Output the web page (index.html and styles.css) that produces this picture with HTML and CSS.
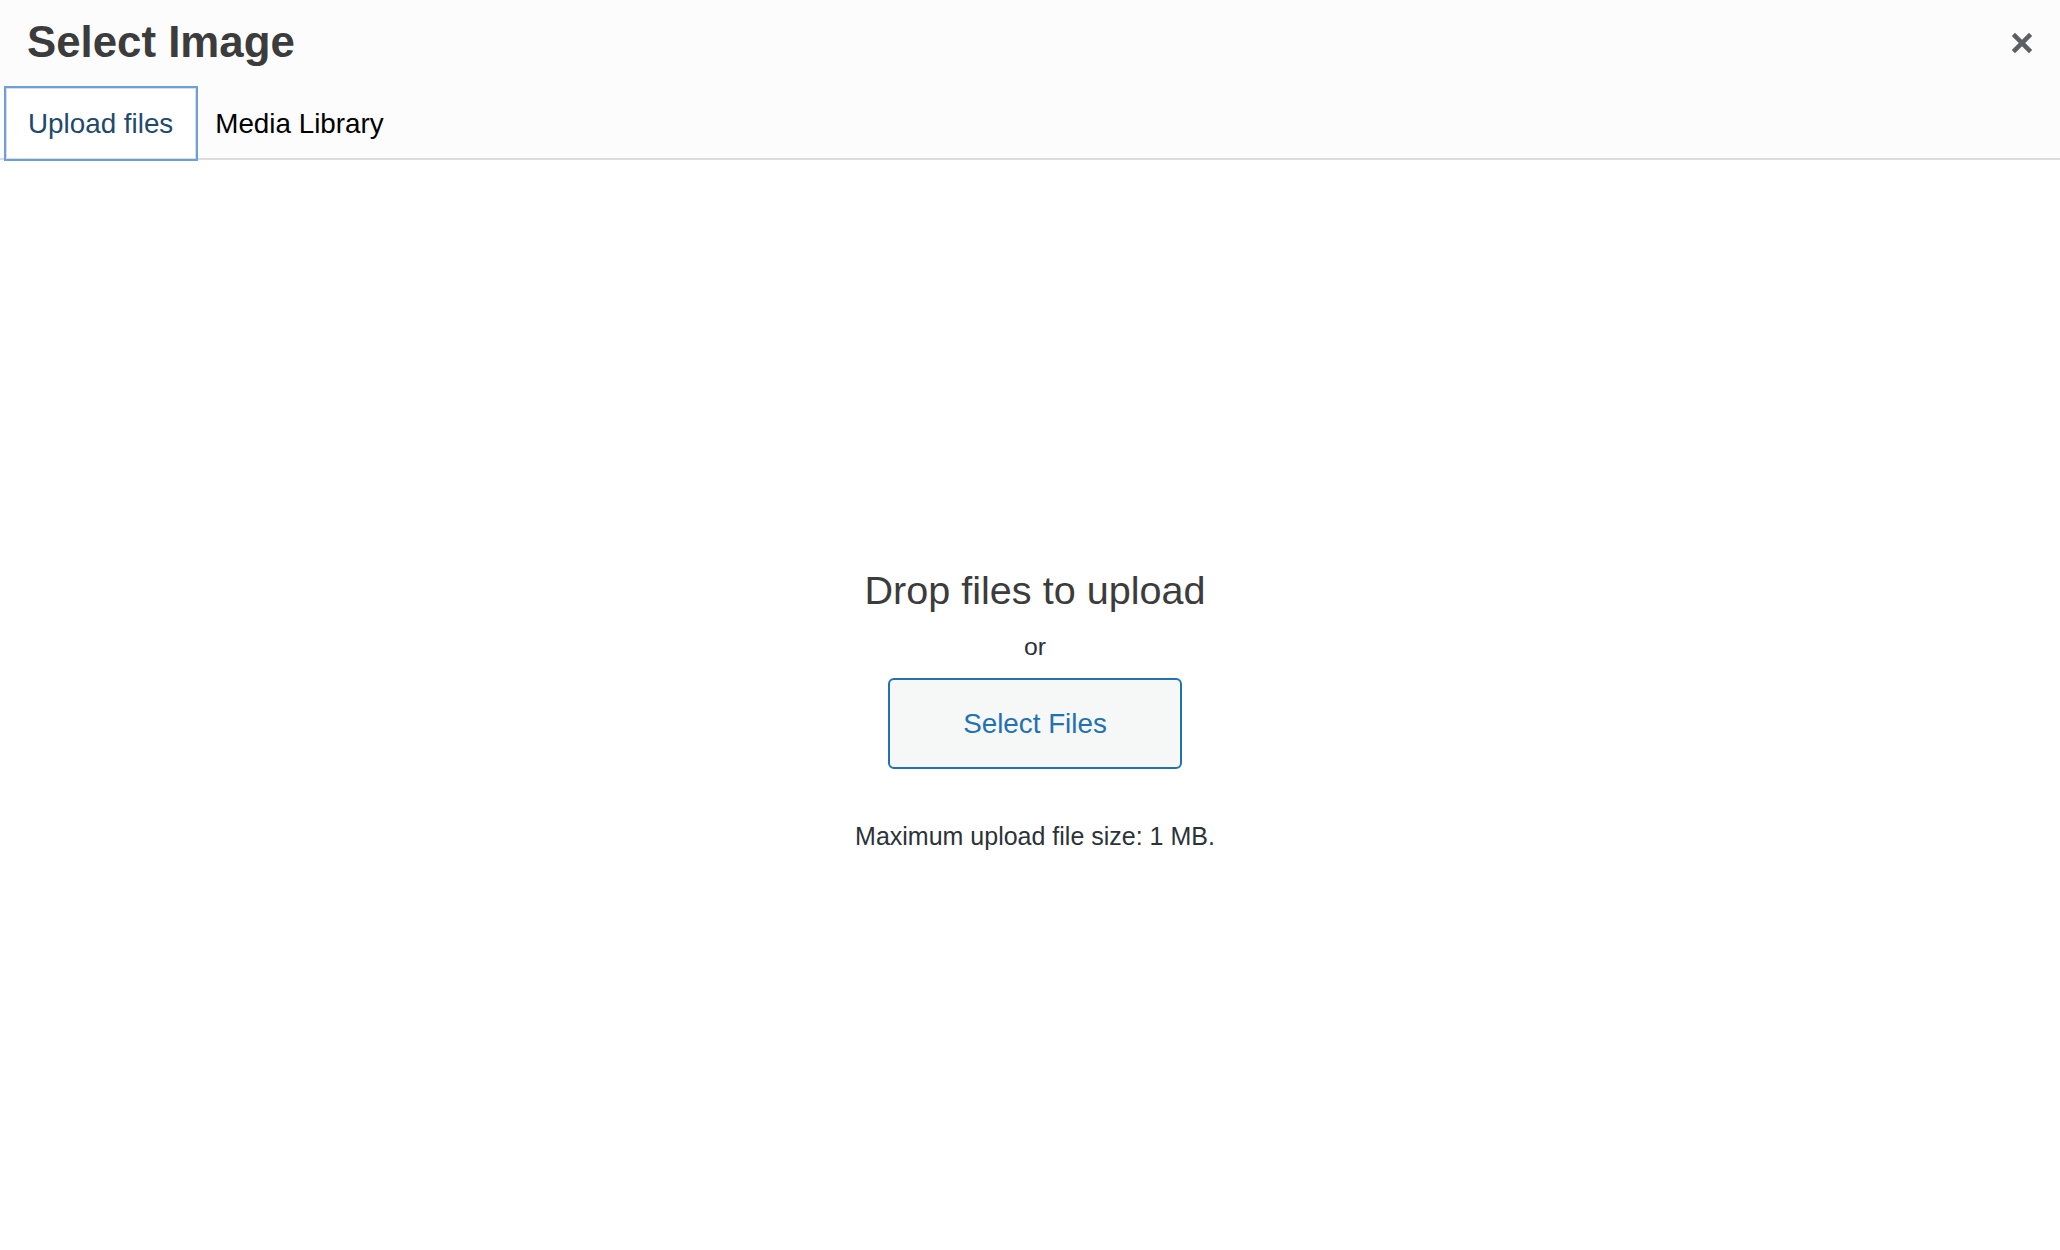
FILE: index.html
```html
<!DOCTYPE html>
<html lang="en">
<head>
<meta charset="utf-8">
<title>Select Image</title>
<link rel="stylesheet" href="styles.css">
</head>
<body>
<div class="modal">
  <header class="modal-header">
    <div class="title-row">
      <h1 class="modal-title">Select Image</h1>
      <button class="close-btn" aria-label="Close dialog">
        <svg width="22" height="22" viewBox="0 0 22 22" aria-hidden="true">
          <path d="M4 0.8 L11 7.8 L18 0.8 L21.2 4 L14.2 11 L21.2 18 L18 21.2 L11 14.2 L4 21.2 L0.8 18 L7.8 11 L0.8 4 Z" fill="#5c5f63"/>
        </svg>
      </button>
    </div>
    <nav class="tabs">
      <a class="tab tab-active">Upload files</a>
      <a class="tab">Media Library</a>
    </nav>
  </header>
  <main class="uploader">
    <h2 class="drop-title">Drop files to upload</h2>
    <p class="or">or</p>
    <button class="select-btn">Select Files</button>
    <p class="max-size">Maximum upload file size: 1 MB.</p>
  </main>
</div>
</body>
</html>
```

FILE: styles.css
```css
html, body {
  margin: 0;
  padding: 0;
  background: #ffffff;
}
body {
  width: 2060px;
  height: 1250px;
  overflow: hidden;
  font-family: "Liberation Sans", Arial, sans-serif;
}
.modal {
  display: flex;
  flex-direction: column;
  height: 100%;
}
.modal-header {
  background: #fcfcfc;
  height: 158px;
  border-bottom: 2px solid #dcdcde;
  display: flex;
  flex-direction: column;
}
.title-row {
  display: flex;
  justify-content: space-between;
  align-items: center;
  margin-top: 17px;
  padding-left: 27px;
  padding-right: 27px;
  height: 50px;
}
.modal-title {
  margin: 0;
  font-size: 43.8px;
  line-height: 50px;
  font-weight: 700;
  color: #3c3c3c;
}
.close-btn {
  border: 0;
  background: transparent;
  padding: 0;
  width: 22px;
  height: 22px;
  display: flex;
  margin-top: 1px;
}
.tabs {
  display: flex;
  margin-top: 21px;
  margin-left: 6px;
}
.tab {
  font-size: 27.8px;
  line-height: 34px;
  padding: 17.5px 18px 17.5px 18px;
  color: #000000;
  border: 1px solid transparent;
}
.tab-active {
  padding-left: 21px;
  padding-right: 22px;
  background: #ffffff;
  border-color: #dcdcde;
  color: #1f4a6e;
  box-shadow: 0 0 0 2px #6ca0da;
  position: relative;
  z-index: 1;
}
.uploader {
  display: flex;
  flex-direction: column;
  align-items: center;
  padding-top: 408px;
  padding-left: 10px;
}
.drop-title {
  margin: 0;
  font-size: 39.6px;
  line-height: 44px;
  font-weight: 400;
  color: #3c3c3c;
}
.or {
  margin: 19.5px 0 0;
  font-size: 24.8px;
  line-height: 30px;
  color: #2c3338;
}
.select-btn {
  margin-top: 16.5px;
  width: 294px;
  height: 91px;
  border: 2px solid #2271b1;
  border-radius: 6px;
  background: #f6f7f7;
  color: #2271b1;
  font-family: "Liberation Sans", Arial, sans-serif;
  font-size: 27.8px;
  line-height: 34px;
  padding: 0;
}
.max-size {
  margin: 51.5px 0 0;
  font-size: 25px;
  line-height: 30px;
  color: #2c3338;
}
```
